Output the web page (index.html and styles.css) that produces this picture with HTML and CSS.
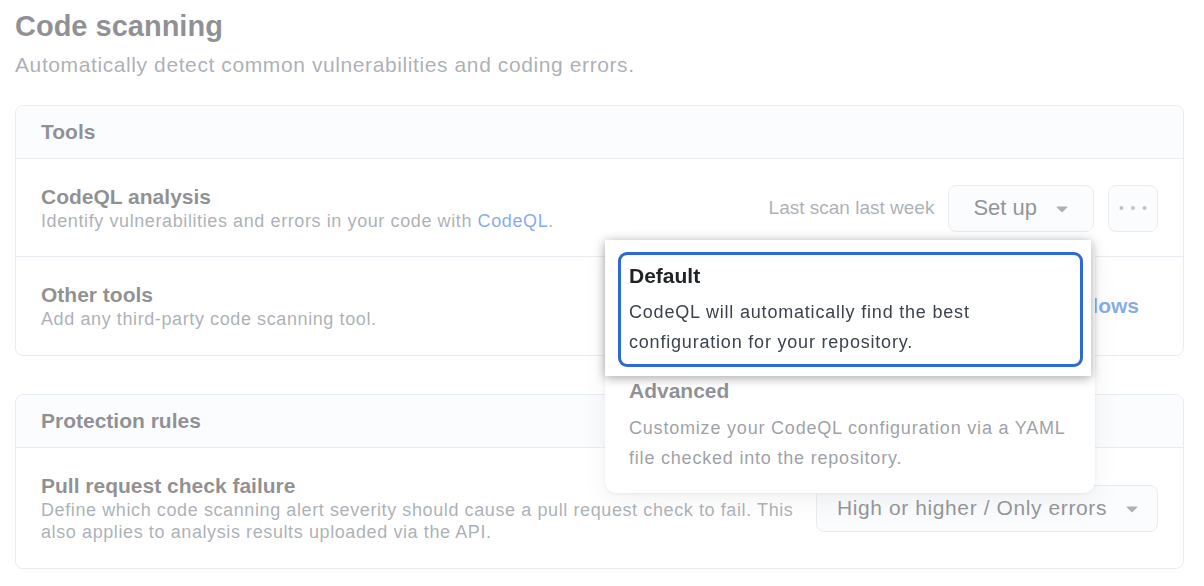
FILE: index.html
```html
<!DOCTYPE html>
<html lang="en">
<head>
    <meta charset="UTF-8">
    <meta name="viewport" content="width=device-width, initial-scale=1.0">
    <title>Code scanning</title>
    <link rel="stylesheet" href="styles.css">
</head>
<body>
    <div class="page">
        <h1 class="page-title">Code scanning</h1>
        <p class="page-lead">Automatically detect common vulnerabilities and coding errors.</p>

        <section class="box">
            <div class="box-header">Tools</div>
            <div class="box-row">
                <div class="row-text">
                    <h3 class="row-title">CodeQL analysis</h3>
                    <p class="row-desc">Identify vulnerabilities and errors in your code with <a href="#">CodeQL</a>.</p>
                </div>
                <span class="row-meta">Last scan last week</span>
                <div class="dropdown">
                    <button class="btn btn-setup">Set up
                        <svg class="caret" viewBox="0 0 16 16" width="24" height="24"><path d="m4.427 7.427 3.396 3.396a.25.25 0 0 0 .354 0l3.396-3.396A.25.25 0 0 0 11.396 7H4.604a.25.25 0 0 0-.177.427Z"/></svg>
                    </button>
                    <div class="menu">
                        <div class="menu-item is-highlighted">
                            <div class="option-box">
                                <div class="option-title">Default</div>
                                <div class="option-desc">CodeQL will automatically find the best configuration for your repository.</div>
                            </div>
                        </div>
                        <div class="menu-item">
                            <div class="option-title">Advanced</div>
                            <div class="option-desc">Customize your CodeQL configuration via a YAML file checked into the repository.</div>
                        </div>
                    </div>
                </div>
                <button class="btn btn-icon" aria-label="More">
                    <svg viewBox="0 0 30 8" width="30" height="8"><circle cx="3.5" cy="4" r="2"/><circle cx="15" cy="4" r="2"/><circle cx="26.5" cy="4" r="2"/></svg>
                </button>
            </div>
            <div class="box-row">
                <div class="row-text">
                    <h3 class="row-title">Other tools</h3>
                    <p class="row-desc">Add any third-party code scanning tool.</p>
                </div>
                <a class="row-link" href="#">Explore workflows</a>
            </div>
        </section>

        <section class="box">
            <div class="box-header">Protection rules</div>
            <div class="box-row">
                <div class="row-text">
                    <h3 class="row-title">Pull request check failure</h3>
                    <p class="row-desc">Define which code scanning alert severity should cause a pull request check to fail. This<br>also applies to analysis results uploaded via the API.</p>
                </div>
                <button class="btn btn-select">High or higher / Only errors
                    <svg class="caret" viewBox="0 0 16 16" width="24" height="24"><path d="m4.427 7.427 3.396 3.396a.25.25 0 0 0 .354 0l3.396-3.396A.25.25 0 0 0 11.396 7H4.604a.25.25 0 0 0-.177.427Z"/></svg>
                </button>
            </div>
        </section>
    </div>
    <div class="dim"></div>
</body>
</html>
```
FILE: styles.css
```css
* {
    box-sizing: border-box;
}

body {
    margin: 0;
    background: #fff;
    color: #1f2328;
    font-family: "Liberation Sans", Arial, sans-serif;
}

a {
    color: #0b57d0;
    text-decoration: none;
}

.page {
    padding: 10px 20px 0 15px;
}

.page-title {
    margin: 0;
    font-size: 29px;
    line-height: 32px;
    font-weight: 700;
}

.page-lead {
    margin: 9px 0 26px;
    font-size: 21px;
    line-height: 28px;
    letter-spacing: 0.6px;
    color: #59636e;
}

.box {
    border: 1px solid #d1d9e0;
    border-radius: 8px;
    margin-bottom: 38px;
}

.box-header {
    background: #f6f8fa;
    border-bottom: 1px solid #d1d9e0;
    border-radius: 8px 8px 0 0;
    padding: 13px 25px;
    font-size: 21px;
    line-height: 26px;
    font-weight: 700;
}

.box-row {
    display: flex;
    align-items: center;
    padding: 25px 25px 24px;
}

.box-row:last-child {
    padding-bottom: 25px;
}

.box-row + .box-row {
    border-top: 1px solid #d1d9e0;
}

.row-text {
    flex: 1;
    min-width: 0;
}

.row-title {
    margin: 0;
    font-size: 21px;
    line-height: 26px;
    font-weight: 700;
}

.row-desc {
    margin: 0;
    font-size: 18px;
    line-height: 22px;
    letter-spacing: 0.6px;
    color: #59636e;
}

.row-meta {
    margin-right: 14px;
    font-size: 19px;
    color: #59636e;
}

.row-link {
    margin-right: 19px;
    font-size: 21px;
    font-weight: 700;
}

.btn {
    display: flex;
    align-items: center;
    height: 47px;
    border: 1px solid #d1d9e0;
    border-radius: 8px;
    background: #f6f8fa;
    color: #25292e;
    font-family: inherit;
    font-size: 22px;
    cursor: pointer;
}

.caret {
    fill: #59636e;
}

.btn-setup {
    gap: 13px;
    padding: 0 19px 0 24px;
}

.btn-icon {
    justify-content: center;
    width: 50px;
    margin-left: 14px;
    padding: 0;
    fill: #818990;
}

.btn-select {
    gap: 13px;
    margin-left: 18px;
    padding: 0 13px 0 20px;
    font-size: 21px;
    letter-spacing: 0.6px;
}

.dropdown {
    position: relative;
}

.menu {
    position: absolute;
    top: calc(100% + 8px);
    right: -1px;
    width: 490px;
    background: #fff;
    border-radius: 12px;
    box-shadow: 0 8px 24px rgba(66, 74, 83, 0.14), 0 1px 3px rgba(31, 35, 40, 0.12);
}

.menu-item {
    padding: 2px 20px 20px 24px;
}

.menu-item.is-highlighted {
    position: relative;
    z-index: 3;
    margin-right: 4px;
    padding: 12px 8px 9px 13px;
    background: #fff;
    box-shadow: 0 2px 10px rgba(0, 0, 0, 0.35);
}

.option-box {
    border: 3px solid #2d6ad6;
    border-radius: 9px;
    padding: 8px 8px 7px;
}

.option-title {
    font-size: 21px;
    line-height: 26px;
    font-weight: 700;
}

.option-desc {
    margin-top: 9px;
    font-size: 18px;
    line-height: 30px;
    letter-spacing: 0.8px;
    color: #3b434c;
}

.is-highlighted .option-desc {
    margin-top: 8px;
}

.dim {
    position: fixed;
    inset: 0;
    z-index: 2;
    background: rgba(255, 255, 255, 0.5);
}
```
